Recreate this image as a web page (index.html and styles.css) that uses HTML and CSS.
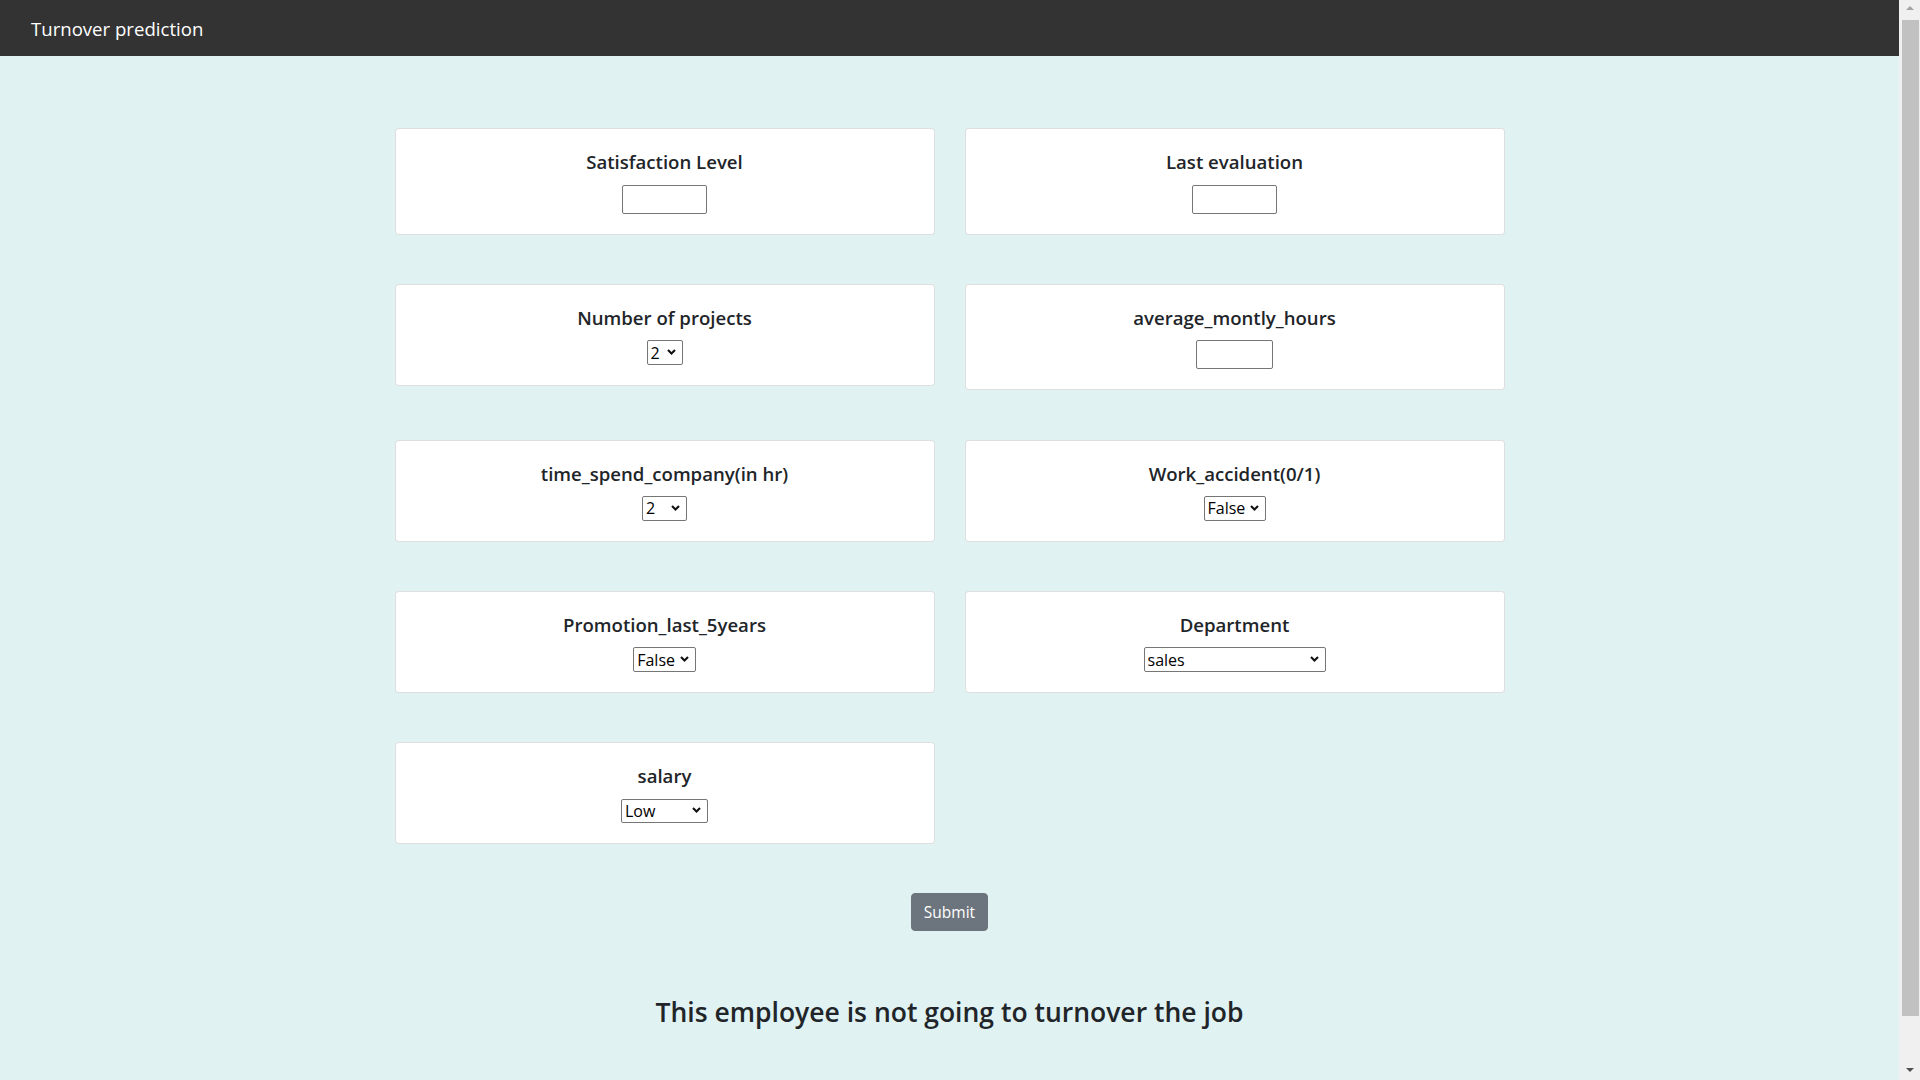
FILE: index.html
```html
<!DOCTYPE html>
<html lang="en">
<head>
<meta charset="utf-8">
<title>Turnover prediction</title>
<link rel="stylesheet" href="styles.css">
</head>
<body>
<nav class="navbar"><span class="brand">Turnover prediction</span></nav>
<main class="container">
  <form class="form-grid">
    <div class="card">
      <h5 class="card-title">Satisfaction Level</h5>
      <input class="field field--w85" type="text">
    </div>
    <div class="card">
      <h5 class="card-title">Last evaluation</h5>
      <input class="field field--w84" type="text">
    </div>
    <div class="card">
      <h5 class="card-title">Number of projects</h5>
      <span class="select-wrap">
        <select class="select select--w36"><option>2</option><option>3</option><option>4</option><option>5</option><option>6</option><option>7</option></select>
        <svg class="chevron" width="9" height="6" viewBox="0 0 9 6"><polyline points="1,1 4.5,4.5 8,1" fill="none" stroke="#111" stroke-width="2.1"/></svg>
      </span>
    </div>
    <div class="card">
      <h5 class="card-title">average_montly_hours</h5>
      <input class="field field--w77" type="text">
    </div>
    <div class="card">
      <h5 class="card-title">time_spend_company(in hr)</h5>
      <span class="select-wrap">
        <select class="select select--w45"><option>2</option><option>3</option><option>4</option><option>5</option><option>6</option><option>7</option><option>8</option><option>10</option></select>
        <svg class="chevron" width="9" height="6" viewBox="0 0 9 6"><polyline points="1,1 4.5,4.5 8,1" fill="none" stroke="#111" stroke-width="2.1"/></svg>
      </span>
    </div>
    <div class="card">
      <h5 class="card-title">Work_accident(0/1)</h5>
      <span class="select-wrap">
        <select class="select select--w62"><option>False</option><option>True</option></select>
        <svg class="chevron" width="9" height="6" viewBox="0 0 9 6"><polyline points="1,1 4.5,4.5 8,1" fill="none" stroke="#111" stroke-width="2.1"/></svg>
      </span>
    </div>
    <div class="card">
      <h5 class="card-title">Promotion_last_5years</h5>
      <span class="select-wrap">
        <select class="select select--w63"><option>False</option><option>True</option></select>
        <svg class="chevron" width="9" height="6" viewBox="0 0 9 6"><polyline points="1,1 4.5,4.5 8,1" fill="none" stroke="#111" stroke-width="2.1"/></svg>
      </span>
    </div>
    <div class="card">
      <h5 class="card-title">Department</h5>
      <span class="select-wrap">
        <select class="select select--w182"><option>sales</option><option>technical</option><option>support</option><option>IT</option><option>product_mng</option><option>marketing</option><option>RandD</option><option>accounting</option><option>hr</option><option>management</option></select>
        <svg class="chevron" width="9" height="6" viewBox="0 0 9 6"><polyline points="1,1 4.5,4.5 8,1" fill="none" stroke="#111" stroke-width="2.1"/></svg>
      </span>
    </div>
    <div class="card">
      <h5 class="card-title">salary</h5>
      <span class="select-wrap">
        <select class="select select--w87"><option>Low</option><option>Medium</option><option>High</option></select>
        <svg class="chevron" width="9" height="6" viewBox="0 0 9 6"><polyline points="1,1 4.5,4.5 8,1" fill="none" stroke="#111" stroke-width="2.1"/></svg>
      </span>
    </div>
  </form>
  <div class="actions"><button class="btn" type="button">Submit</button></div>
  <h3 class="result">This employee is not going to turnover the job</h3>
</main>
<div class="scrollbar" aria-hidden="true">
  <span class="scrollbar-arrow scrollbar-arrow--up"></span>
  <span class="scrollbar-thumb"></span>
  <span class="scrollbar-arrow scrollbar-arrow--down"></span>
</div>
</body>
</html>
```
FILE: styles.css
```css
body {
  margin: 0 21px 0 0;
  background: #e0f2f1;
  color: #212529;
  font-family: "Open Sans", "Noto Sans", "Liberation Sans", sans-serif;
  font-size: 16px;
  line-height: 1.5;
}

/* browser scrollbar as in the reference */
.scrollbar {
  position: fixed;
  top: 0;
  right: 0;
  width: 21px;
  height: 100vh;
  background: #f0f0f0;
  display: flex;
  flex-direction: column;
  align-items: center;
}
.scrollbar-arrow {
  width: 0;
  height: 0;
  box-sizing: border-box;
}
.scrollbar-arrow--up {
  margin: 6px 0 6px;
  border-left: 4px solid transparent;
  border-right: 4px solid transparent;
  border-bottom: 4px solid #a3a3a3;
}
.scrollbar-arrow--down {
  margin: auto 0 8px;
  border-left: 4px solid transparent;
  border-right: 4px solid transparent;
  border-top: 4px solid #505050;
}
.scrollbar-thumb {
  width: 17px;
  margin-left: 2px;
  margin-top: 4px;
  flex: 0 0 996px;
  background: #c1c1c1;
}

.navbar {
  height: 56px;
  background: #333333;
  display: flex;
  align-items: center;
  padding-left: 31px;
}

.brand {
  color: #ffffff;
  font-size: 18.6px;
  line-height: 1.5;
  margin-top: 1px;
}

.container {
  width: 1140px;
  margin: 0 auto;
  padding-top: 72px;
  padding-bottom: 105px;
}

.form-grid {
  display: grid;
  grid-template-columns: 540px 540px;
  justify-content: center;
  column-gap: 30px;
  row-gap: 49.2px;
  align-items: start;
  margin: 0;
}

.card {
  background: #ffffff;
  border: 1px solid rgba(0, 0, 0, 0.125);
  border-radius: 4px;
  padding: 20px;
  display: flex;
  flex-direction: column;
  align-items: center;
}

.card-title {
  margin: 0 0 10.6px;
  padding-top: 1px;
  font-size: 18.6px;
  font-weight: 600;
  line-height: 24px;
  color: #212529;
}

.field {
  box-sizing: border-box;
  height: 29px;
  border: 1px solid #767676;
  border-radius: 2px;
  padding: 1px 2px;
  background: #fff;
  font-family: inherit;
  font-size: 16px;
}
.field--w85 { width: 85px; }
.field--w84 { width: 84.5px; }
.field--w77 { width: 77px; }

.select-wrap {
  position: relative;
  display: inline-block;
  height: 24.4px;
}

.select {
  appearance: none;
  -webkit-appearance: none;
  box-sizing: border-box;
  height: 24.4px;
  border: 1px solid #767676;
  border-radius: 2px;
  background: #ffffff;
  color: #000;
  padding: 0 0 0 3px;
  font-family: inherit;
  font-size: 16px;
  line-height: 22px;
  margin: 0;
}
.select--w36 { width: 36px; }
.select--w45 { width: 45px; }
.select--w62 { width: 62px; }
.select--w63 { width: 62.6px; }
.select--w182 { width: 182px; }
.select--w87 { width: 87px; }

.chevron {
  position: absolute;
  right: 7px;
  top: 8.5px;
  pointer-events: none;
}

.actions {
  display: flex;
  justify-content: center;
  margin-top: 48.7px;
}

.btn {
  background: #6c757d;
  color: #ffffff;
  border: 1px solid #6c757d;
  border-radius: 4px;
  padding: 6px 12px;
  height: 38px;
  font-family: inherit;
  font-size: 15.5px;
  line-height: 24px;
}

.result {
  margin: 65px 0 0;
  text-align: center;
  font-size: 26.5px;
  font-weight: 600;
  line-height: 33.6px;
}
```
